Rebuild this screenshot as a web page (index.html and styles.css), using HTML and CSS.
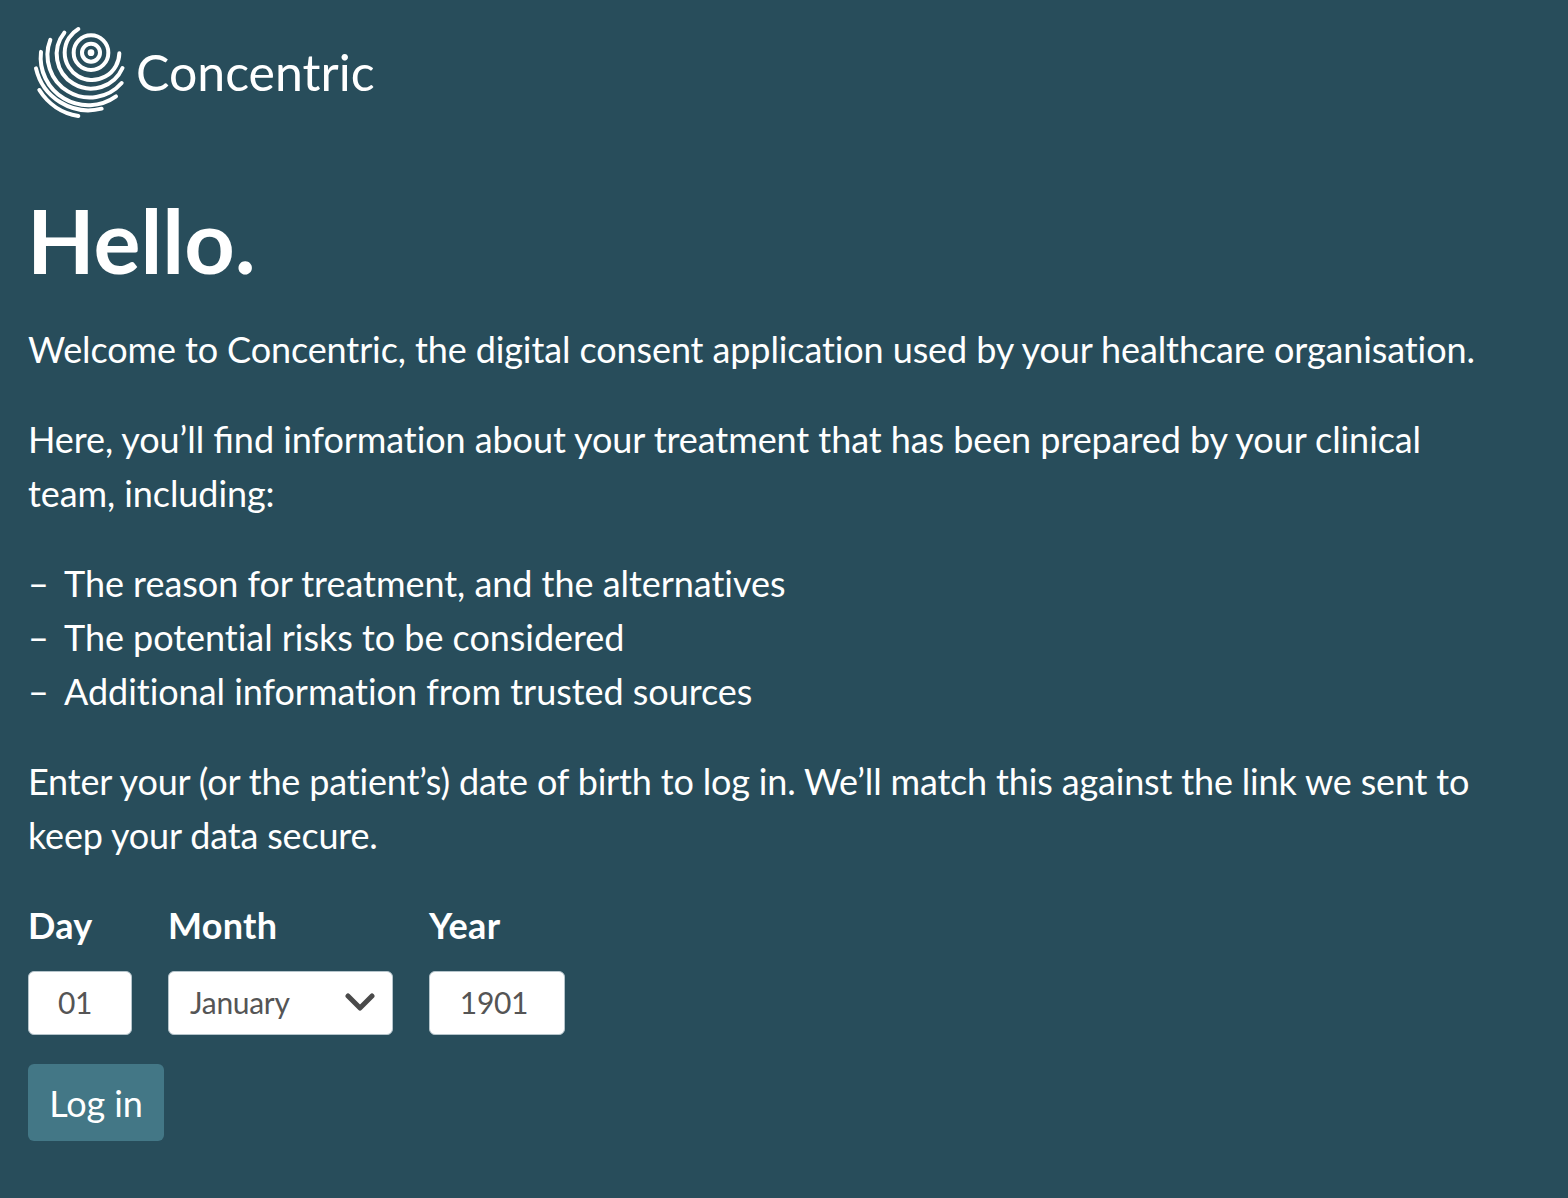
FILE: index.html
```html
<!DOCTYPE html>
<html lang="en">
<head>
<meta charset="utf-8">
<title>Concentric</title>
<link rel="stylesheet" href="styles.css">
</head>
<body>
<header class="brand">
  <svg class="logo" viewBox="30 30 300 285" aria-hidden="true">
    <g fill="none" stroke="#fff" stroke-width="12" stroke-linecap="round">
      <circle cx="213" cy="113" r="10" fill="#fff" stroke="none"/>
      <circle cx="213" cy="113" r="27"/>
      <circle cx="213" cy="113" r="52"/>
      <path d="M175 42A82 82 0 1 0 298 115"/>
      <path d="M133 53A103 103 0 1 0 307.5 159"/>
      <path d="M91 74.5A127 127 0 0 0 305 204"/>
      <path d="M63 110.6A143 143 0 0 0 288 244"/>
      <path d="M48 160A162 162 0 0 0 245 281"/>
      <path d="M58 225A170 170 0 0 0 175 303"/>
    </g>
  </svg>
  <span class="brand-name">Concentric</span>
</header>
<main>
  <h1>Hello.</h1>
  <p>Welcome to Concentric, the digital consent application used by your healthcare organisation.</p>
  <p class="loose">Here, you’ll <span class="lig">find</span> information about your treatment that has been prepared by your clinical team, including:</p>
  <ul>
    <li>The reason for treatment, and the alternatives</li>
    <li>The potential risks to be considered</li>
    <li>Additional information from trusted sources</li>
  </ul>
  <p class="tight">Enter your (or the patient’s) date of birth to log in. We’ll match this against the link we sent to keep your data secure.</p>
  <form class="dob">
    <div class="fields">
      <div class="field">
        <label class="label" for="day">Day</label>
        <input class="input day" id="day" type="text" value="01">
      </div>
      <div class="field">
        <label class="label" for="month">Month</label>
        <div class="select">
          <span>January</span>
          <svg class="chevron" viewBox="0 0 30 20" aria-hidden="true"><path d="M3 4L15 16L27 4" fill="none" stroke="#4a4a4a" stroke-width="5" stroke-linecap="round" stroke-linejoin="round"/></svg>
        </div>
      </div>
      <div class="field">
        <label class="label" for="year">Year</label>
        <input class="input year" id="year" type="text" value="1901">
      </div>
    </div>
    <button class="login" type="button">Log in</button>
  </form>
</main>
</body>
</html>
```

FILE: styles.css
```css
* { box-sizing: border-box; }
html, body { margin: 0; }
body {
  height: 1198px;
  overflow: hidden;
  background: #284d5b;
  color: #fff;
  font-family: Lato, "Noto Sans", sans-serif;
  font-size: 36px;
  line-height: 54px;
  letter-spacing: -0.11px;
  font-variant-ligatures: none;
  padding: 0 28px;
}
main { max-width: 1470px; }
.lig { font-variant-ligatures: common-ligatures; letter-spacing: 0; }
.tight { letter-spacing: -0.17px; }
.loose { letter-spacing: -0.08px; }
.brand {
  display: flex;
  align-items: center;
  height: 145px;
  padding-left: 2px;
}
.logo { width: 100px; height: 95px; flex: none; }
.brand-name {
  font-size: 50px;
  line-height: 60px;
  font-weight: 400;
  margin: 0 0 1px 6px;
  letter-spacing: 0;
}
h1 {
  margin: 40px 0 27px -1px;
  font-size: 88px;
  line-height: 110px;
  font-weight: 700;
  letter-spacing: 0;
}
p { margin: 0 0 36px; }
ul {
  list-style: none;
  margin: 0 0 36px;
  padding: 0;
  letter-spacing: -0.04px;
}
li {
  display: flex;
}
li::before {
  content: "–";
  width: 36px;
  flex: none;
}
.fields { display: flex; gap: 36px; }
.field { display: flex; flex-direction: column; }
.label {
  font-weight: 700;
  display: block;
  margin-bottom: 19px;
  letter-spacing: 0.3px;
}
.input, .select {
  height: 64px;
  border: 1px solid #b5c4cb;
  border-radius: 6px;
  background: #fff;
  color: #555;
  font: 30px/40px Lato, "Noto Sans", sans-serif;
  letter-spacing: -0.3px;
}
.input {
  display: block;
  text-align: center;
  padding: 0 20px 2px;
  outline: none;
}
.input.day { width: 104px; padding-right: 30px; }
.input.year { width: 136px; padding-right: 26px; }
.select {
  width: 225px;
  display: flex;
  align-items: center;
  justify-content: space-between;
  padding: 0 17px 2px 21px;
}
.chevron { width: 30px; height: 20px; flex: none; }
.login {
  display: block;
  margin-top: 29px;
  width: 136px;
  height: 77px;
  border: 0;
  border-radius: 6px;
  background: #437786;
  color: #fff;
  font: 36px/54px Lato, "Noto Sans", sans-serif;
  letter-spacing: -0.11px;
  padding: 0;
}
```
